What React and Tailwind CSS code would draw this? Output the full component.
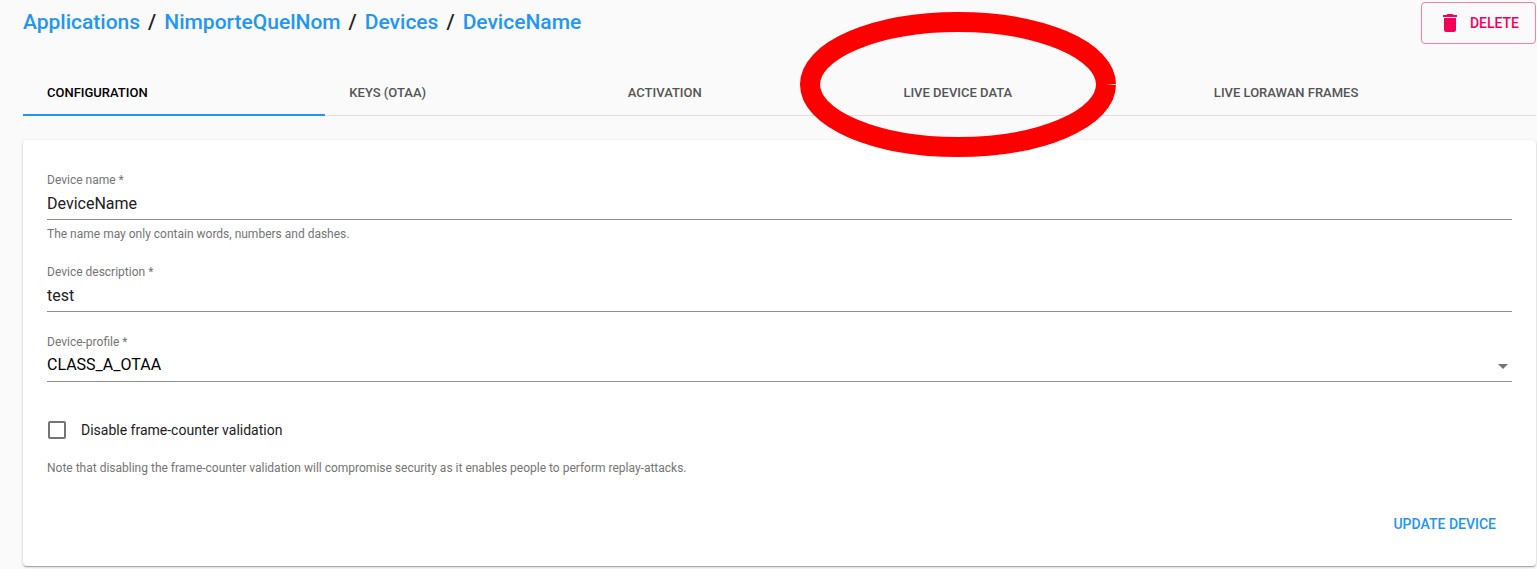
import { MdArrowDropDown, MdDelete } from "react-icons/md";

const crumbs = ["Applications", "NimporteQuelNom", "Devices", "DeviceName"];

const tabs = [
  { label: "CONFIGURATION", active: true },
  { label: "KEYS (OTAA)" },
  { label: "ACTIVATION" },
  { label: "LIVE DEVICE DATA", highlighted: true },
  { label: "LIVE LORAWAN FRAMES" },
];

function Highlight() {
  return (
    <svg
      className="pointer-events-none absolute -top-[58px] -left-[103px] z-10 h-[145px] w-[316px]"
      viewBox="0 0 316 145"
      fill="none"
      aria-hidden="true"
    >
      <ellipse cx="158" cy="72.5" rx="148" ry="62.5" stroke="#ff0000" strokeWidth="20" />
      <path d="M306 72.5L316 72V73Z" fill="#fafafa" />
    </svg>
  );
}

function Tab({ label, active, highlighted }) {
  return (
    <button
      type="button"
      role="tab"
      aria-selected={Boolean(active)}
      className={
        active
          ? "-mb-px flex h-12 flex-auto items-center border-b-2 border-[#2196f3] px-6 pt-1 text-black"
          : "-mb-px flex h-12 flex-auto items-center px-6 pt-0.5 text-[#545454]"
      }
    >
      <span className="relative flex h-full items-center">
        {label}
        {highlighted && <Highlight />}
      </span>
    </button>
  );
}

function TextField({ id, label, value, helper }) {
  return (
    <div className="flex flex-col">
      <label htmlFor={id} className="text-xs text-[#757575]">
        {label} *
      </label>
      <input
        id={id}
        type="text"
        required
        defaultValue={value}
        className="h-8 w-full border-b border-[#8e8e8e] bg-transparent text-base text-[#212121] outline-none"
      />
      {helper && <p className="mt-1.5 text-xs text-[#757575]">{helper}</p>}
    </div>
  );
}

export default function App() {
  return (
    <div className="min-h-screen bg-[#fafafa] pt-0.5 pr-px pb-[3px] pl-[23px] font-['Roboto',sans-serif]">
      <header className="flex items-center justify-between">
        <nav aria-label="Breadcrumb" className="pb-0.5">
          <ol className="flex gap-2 text-[21px] leading-7 font-medium text-[#212121]">
            {crumbs.map((name, i) => (
              <li key={name} className="flex gap-2">
                {i > 0 && <span>/</span>}
                <a href="#" className="text-[#2196f3]">
                  {name}
                </a>
              </li>
            ))}
          </ol>
        </nav>
        <button
          type="button"
          className="flex h-[42px] items-center gap-2 rounded border border-[#f77fa9] px-4 text-sm font-medium text-[#f50057]"
        >
          <MdDelete className="size-6" />
          DELETE
        </button>
      </header>

      <div
        role="tablist"
        className="mt-6 flex border-b border-[#dedede] text-[13px] font-medium"
      >
        {tabs.map((tab) => (
          <Tab key={tab.label} {...tab} />
        ))}
      </div>

      <form className="mt-6 flex flex-col rounded bg-white px-6 pt-8 pb-6 shadow-[0_1px_3px_rgba(0,0,0,0.2),0_1px_1px_rgba(0,0,0,0.14),0_2px_1px_-1px_rgba(0,0,0,0.12)]">
        <div className="flex flex-col gap-[22px]">
          <TextField
            id="name"
            label="Device name"
            value="DeviceName"
            helper="The name may only contain words, numbers and dashes."
          />
          <TextField id="description" label="Device description" value="test" />
          <div className="flex flex-col">
            <label htmlFor="profile" className="text-xs text-[#757575]">
              Device-profile *
            </label>
            <div className="grid items-center border-b border-[#8e8e8e]">
              <select
                id="profile"
                className="col-start-1 row-start-1 h-[31px] w-full appearance-none bg-transparent pb-0.5 text-base text-black outline-none"
              >
                <option>CLASS_A_OTAA</option>
              </select>
              <MdArrowDropDown className="pointer-events-none col-start-1 row-start-1 -mr-[3px] size-6 justify-self-end text-[#757575]" />
            </div>
          </div>
        </div>

        <label className="mt-[38px] flex items-center gap-[15px] self-start pl-px text-sm text-[#212121]">
          <input
            type="checkbox"
            className="size-[18px] appearance-none rounded-xs border-2 border-[#757575] checked:bg-[#757575]"
          />
          Disable frame-counter validation
        </label>
        <p className="mt-5 text-xs text-[#757575]">
          Note that disabling the frame-counter validation will compromise security as it enables
          people to perform replay-attacks.
        </p>

        <button
          type="button"
          className="mt-[30px] h-9 self-end rounded px-4 text-sm font-medium text-[#2196f3]"
        >
          UPDATE DEVICE
        </button>
      </form>
    </div>
  );
}
